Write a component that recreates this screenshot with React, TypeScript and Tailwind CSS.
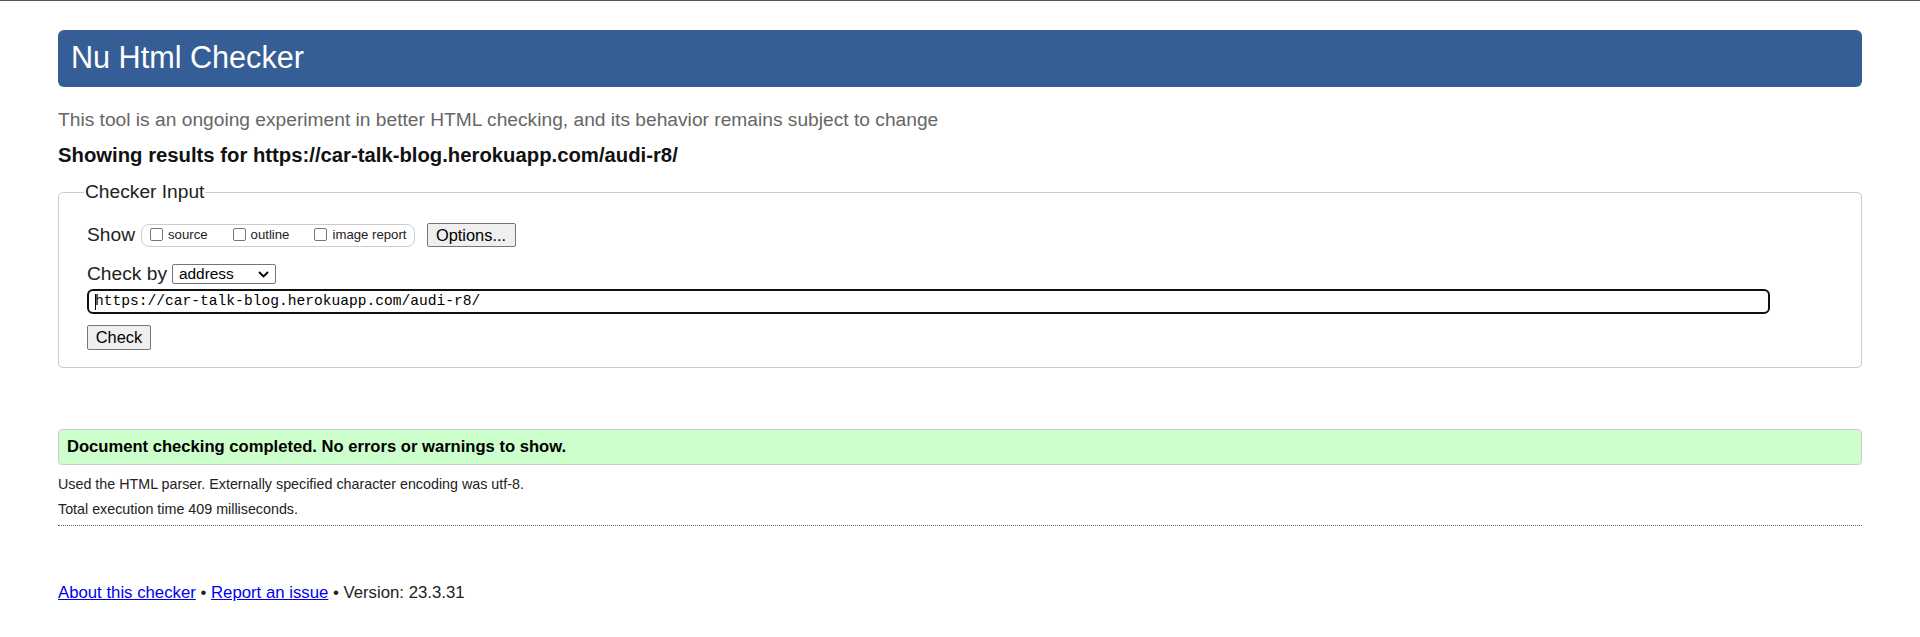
import React from 'react';

const Checkbox: React.FC = () => (
  <span className="inline-block h-[13px] w-[13px] shrink-0 rounded-[2px] border border-[#767676] bg-white" />
);

const ShowOption: React.FC<{ label: string; last?: boolean }> = ({ label, last }) => (
  <span className={`flex items-center gap-[5px] ${last ? '' : 'mr-[25px]'}`}>
    <Checkbox />
    <span className="text-[13.2px] leading-none text-[#222]">{label}</span>
  </span>
);

export default function App() {
  return (
    <div className="min-h-[637px] border-t border-[#555] bg-white font-['Liberation_Sans',Arial,sans-serif] text-[#222]">
      <div className="px-[58px]">
        <h1 className="mt-[29px] h-[57px] rounded-[6px] bg-[#365e96] pb-[2px] pl-[13px] text-[30.6px] font-normal leading-[55px] text-white">
          Nu Html Checker
        </h1>

        <p className="mt-[21px] text-[19.2px] leading-[24px] text-[#666]">
          This tool is an ongoing experiment in better HTML checking, and its behavior remains subject to change
        </p>

        <p className="mt-[11px] text-[20.3px] font-bold leading-[24px] text-[#111]">
          Showing results for https://car-talk-blog.herokuapp.com/audi-r8/
        </p>

        <fieldset className="mt-[14px] rounded-[5px] border border-[#ccc] pb-[17px] pl-[28px]">
          <legend className="ml-[-3px] px-[1px] text-[19.2px] leading-[22px] text-[#222]">Checker Input</legend>

          <div className="mt-[20px] flex items-center">
            <span className="text-[19.2px] leading-[24px]">Show</span>
            <div className="ml-[6px] flex h-[23px] items-center rounded-[8px] border border-[#ccc] pl-[8px] pr-[7px]">
              <ShowOption label="source" />
              <ShowOption label="outline" />
              <ShowOption label="image report" last />
            </div>
            <button className="ml-[12px] h-[24px] w-[89px] rounded-[2px] border border-[#767676] bg-[#efefef] text-[16.4px] leading-none text-black">
              Options...
            </button>
          </div>

          <div className="mt-[17px] flex items-center">
            <span className="text-[19.2px] leading-[20px]">Check by</span>
            <div className="ml-[5px] flex h-[20px] w-[104px] items-center justify-between rounded-[2px] border border-[#767676] bg-white pl-[6px] pr-[6px]">
              <span className="text-[15.4px] leading-none text-black">address</span>
              <svg width="11" height="7" viewBox="0 0 11 7" fill="none">
                <path d="M1 1l4.5 4.5L10 1" stroke="#000" strokeWidth="1.8" />
              </svg>
            </div>
          </div>

          <div className="mt-[5px] flex h-[25px] w-[1683px] items-center rounded-[6px] border-2 border-[#101010] bg-white pl-[6px]">
            <span className="mr-[-1px] h-[16px] w-[1px] bg-black" />
            <span className="font-['Liberation_Mono',Consolas,monospace] text-[14.6px] leading-none text-black">
              https://car-talk-blog.herokuapp.com/audi-r8/
            </span>
          </div>

          <button className="mt-[11px] h-[25px] w-[64px] rounded-[2px] border border-[#767676] bg-[#efefef] text-[16.4px] leading-none text-black">
            Check
          </button>
        </fieldset>

        <div className="mt-[61px] flex h-[36px] items-center rounded-[4px] border border-[#ccc] bg-[#ccffcc] pl-[8px]">
          <span className="text-[16.6px] font-bold text-black">
            Document checking completed. No errors or warnings to show.
          </span>
        </div>

        <p className="mt-[7px] text-[14.3px] leading-[25px] text-[#222]">
          Used the HTML parser. Externally specified character encoding was utf-8.
        </p>
        <p className="text-[14.3px] leading-[25px] text-[#222]">Total execution time 409 milliseconds.</p>

        <div className="mt-[3px] border-t border-dotted border-[#666]" />

        <p className="mt-[55px] text-[16.75px] leading-[24px] text-[#222]">
          <a href="#" className="text-[#0000ee] underline">About this checker</a>
          {' • '}
          <a href="#" className="text-[#0000ee] underline">Report an issue</a>
          {' • Version: 23.3.31'}
        </p>
      </div>
    </div>
  );
}
